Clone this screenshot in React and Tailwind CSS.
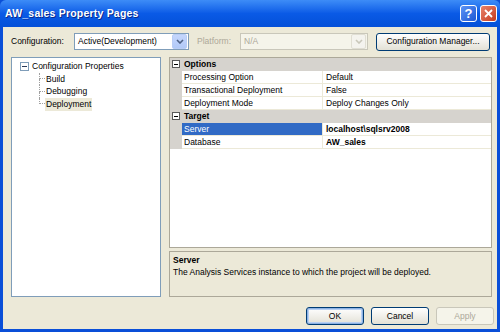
import React from 'react';

const font = "font-['Liberation_Sans',Arial,sans-serif]";

function DropArrow({ disabled }) {
  return (
    <div
      className={
        'w-[15px] h-[15px] rounded-[2px] flex items-center justify-center border ' +
        (disabled
          ? 'bg-[#f4f3ee] border-[#e0ded3]'
          : 'bg-gradient-to-b from-[#c5d6fc] to-[#b1c9f7] border-[#b9cdf5]')
      }
    >
      <svg width="8" height="5" viewBox="0 0 8 5">
        <path d="M1 1 L4 4 L7 1" fill="none" stroke={disabled ? '#c9c7ba' : '#4d6185'} strokeWidth="1.6" />
      </svg>
    </div>
  );
}

function XpButton({ children, w = 'w-[58px]', primary, disabled }) {
  return (
    <div
      className={
        w +
        ' h-[18px] rounded-[3px] border flex items-center justify-center text-[8.5px] ' +
        (disabled
          ? 'border-[#c9c7ba] bg-[#f5f4ea] text-[#aca899]'
          : primary
          ? 'border-[#003c74] bg-gradient-to-b from-[#ffffff] to-[#e3e1d6] text-black shadow-[inset_0_0_0_1px_#8db2e3,inset_0_0_0_2px_#b9d1f3]'
          : 'border-[#003c74] bg-gradient-to-b from-[#ffffff] to-[#e3e1d6] text-black')
      }
    >
      {children}
    </div>
  );
}

function TreeChild({ label, last, selected }) {
  return (
    <div className="flex h-[12.7px]">
      <div className="w-[6px] flex flex-col">
        <div className="h-1/2 border-l border-b border-dotted border-[#a0a0a0]" />
        <div className={'h-1/2 ' + (last ? '' : 'border-l border-dotted border-[#a0a0a0]')} />
      </div>
      <span className={'px-[1px] leading-[12.7px] ' + (selected ? 'bg-[#ece9d8]' : '')}>
        {label}
      </span>
    </div>
  );
}

function CategoryRow({ label }) {
  return (
    <div className="flex h-[13px] bg-[#d6d3ce] border-b border-[#d6d3ce]">
      <div className="w-[12px] flex items-center justify-center">
        <div className="w-[8px] h-[8px] border border-[#5a5a5a] bg-white flex items-center justify-center">
          <div className="w-[4px] h-[1px] bg-black" />
        </div>
      </div>
      <span className="pl-[2px] font-bold leading-[12px]">{label}</span>
    </div>
  );
}

function PropRow({ name, value, selected, bold }) {
  return (
    <div className="flex h-[13px]">
      <div className="w-[12px] bg-[#d6d3ce]" />
      <div
        className={
          'w-[141px] pl-[2px] leading-[12px] border-b border-r border-[#ece9d8] ' +
          (selected ? 'bg-[#316ac5] text-white' : 'bg-white')
        }
      >
        {name}
      </div>
      <div
        className={
          'flex-1 pl-[3px] leading-[12px] bg-white border-b border-[#ece9d8] ' +
          (bold ? 'font-bold' : '')
        }
      >
        {value}
      </div>
    </div>
  );
}

export default function App() {
  return (
    <div className={'w-[500px] h-[332px] flex flex-col bg-[#0a4fd8] text-black text-[8.5px] ' + font}>
      {/* Title bar */}
      <div className="h-[27px] flex items-center justify-between pl-[5px] pr-[3px] bg-gradient-to-b from-[#3d8cf7] via-[#0a5ae6] to-[#0450d8] rounded-t-[6px]">
        <span className="text-white font-bold text-[10.5px] tracking-[0.2px] [text-shadow:1px_1px_0_#0a2a8c]">
          AW_sales Property Pages
        </span>
        <div className="flex gap-[3px] pb-[1px]">
          <div className="w-[17px] h-[17px] rounded-[3px] border border-white bg-gradient-to-br from-[#5c94f5] to-[#1e57d4] flex items-center justify-center text-white font-bold text-[13px] leading-none">
            ?
          </div>
          <div className="w-[17px] h-[17px] rounded-[3px] border border-white bg-gradient-to-br from-[#e8826a] to-[#c6391a] flex items-center justify-center">
            <svg width="9" height="9" viewBox="0 0 9 9">
              <path d="M1 1 L8 8 M8 1 L1 8" stroke="white" strokeWidth="1.8" />
            </svg>
          </div>
        </div>
      </div>

      {/* Body */}
      <div className="flex-1 mx-[3px] mb-[3px] bg-[#ece9d8] flex flex-col pl-[8px] pr-[5px]">
        {/* Config row */}
        <div className="flex items-center h-[17px] mt-[6px]">
          <span className="w-[63px]">Configuration:</span>
          <div className="w-[115px] h-[17px] bg-white border border-[#7f9db9] flex items-center justify-between pl-[3px] pr-[1px]">
            <span>Active(Development)</span>
            <DropArrow />
          </div>
          <span className="ml-[8px] w-[43px] text-[#aca899]">Platform:</span>
          <div className="w-[128px] h-[17px] bg-[#f5f4ea] border border-[#c9c7ba] flex items-center justify-between pl-[3px] pr-[1px] text-[#aca899]">
            <span>N/A</span>
            <DropArrow disabled />
          </div>
          <div className="ml-[8px]">
            <XpButton w="w-[114px]">Configuration Manager...</XpButton>
          </div>
        </div>

        {/* Main area */}
        <div className="flex mt-[7px] h-[240px]">
          {/* Tree */}
          <div className="w-[150px] h-[240px] bg-white border border-[#7f9db9] pt-[2px] pl-[8px]">
            <div className="flex items-center h-[12.7px]">
              <div className="w-[9px] h-[9px] border border-[#7f9db9] bg-white flex items-center justify-center">
                <div className="w-[5px] h-[1px] bg-[#2a3a5a]" />
              </div>
              <span className="ml-[3px]">Configuration Properties</span>
            </div>
            <div className="ml-[19px]">
              <TreeChild label="Build" />
              <TreeChild label="Debugging" />
              <TreeChild label="Deployment" last selected />
            </div>
          </div>

          {/* Right column */}
          <div className="ml-[8px] flex-1 flex flex-col">
            <div className="h-[191px] bg-white border border-[#aca899] flex flex-col">
              <CategoryRow label="Options" />
              <PropRow name="Processing Option" value="Default" />
              <PropRow name="Transactional Deployment" value="False" />
              <PropRow name="Deployment Mode" value="Deploy Changes Only" />
              <CategoryRow label="Target" />
              <PropRow name="Server" value={'localhost\\sqlsrv2008'} selected bold />
              <PropRow name="Database" value="AW_sales" bold />
            </div>
            <div className="mt-[3px] flex-1 border border-[#aca899] px-[3px] pt-[2px]">
              <div className="font-bold leading-[12px]">Server</div>
              <div className="leading-[12px]">The Analysis Services instance to which the project will be deployed.</div>
            </div>
          </div>
        </div>

        {/* Buttons */}
        <div className="flex justify-end gap-[7px] mt-[10px] mr-[-2px]">
          <XpButton primary>OK</XpButton>
          <XpButton>Cancel</XpButton>
          <XpButton disabled>Apply</XpButton>
        </div>
      </div>
    </div>
  );
}
